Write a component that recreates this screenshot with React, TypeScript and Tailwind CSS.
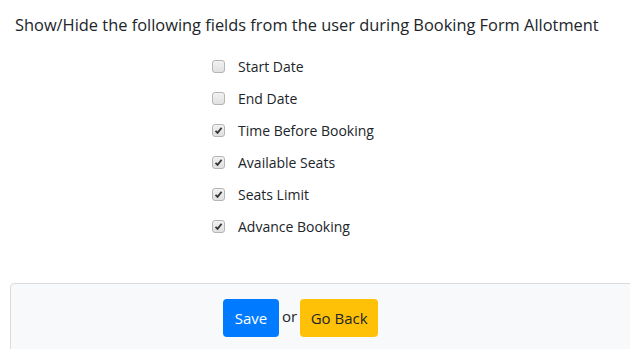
import React from "react";

const fields = [
  { label: "Start Date", checked: false },
  { label: "End Date", checked: false },
  { label: "Time Before Booking", checked: true },
  { label: "Available Seats", checked: true },
  { label: "Seats Limit", checked: true },
  { label: "Advance Booking", checked: true },
];

function Box({ checked }: { checked: boolean }) {
  return (
    <span className="w-[13px] h-[13px] rounded-[3px] border border-[#b5b5b5] bg-gradient-to-b from-[#f2f2f2] to-[#e0e0e0] flex items-center justify-center">
      {checked && (
        <svg width="9" height="9" viewBox="0 0 9 9">
          <path d="M1.5 4.8 L3.6 6.8 L7.6 1.8" fill="none" stroke="#333" strokeWidth="1.8" />
        </svg>
      )}
    </span>
  );
}

export default function App() {
  return (
    <div className="w-[630px] h-[349px] bg-white overflow-hidden flex flex-col" style={{ fontFamily: '"Open Sans", sans-serif' }}>
      <div className="pl-[15px] pt-[13px] text-[16.4px] text-[#212529] leading-[24px]">
        Show/Hide the following fields from the user during Booking Form Allotment
      </div>
      <div className="pl-[212px] pt-[13px] flex flex-col">
        {fields.map((f) => (
          <div key={f.label} className="h-[32px] flex items-center gap-[13px]">
            <Box checked={f.checked} />
            <span className="text-[14px] text-[#212529]">{f.label}</span>
          </div>
        ))}
      </div>
      <div className="mt-auto ml-[10px] -mr-[10px] -mb-[10px] h-[76px] border border-[#dcdcdc] rounded-tl-[4px] bg-[#f8f9fa] pl-[212px] pt-[15px] flex items-start gap-[3px]">
        <button className="h-[38px] w-[56px] rounded-[4px] bg-[#007bff] text-white text-[15px]">Save</button>
        <span className="text-[15px] text-[#212529] mt-[6px]">or</span>
        <button className="h-[38px] w-[78px] rounded-[4px] bg-[#ffc107] text-[#212529] text-[15px]">Go Back</button>
      </div>
    </div>
  );
}
